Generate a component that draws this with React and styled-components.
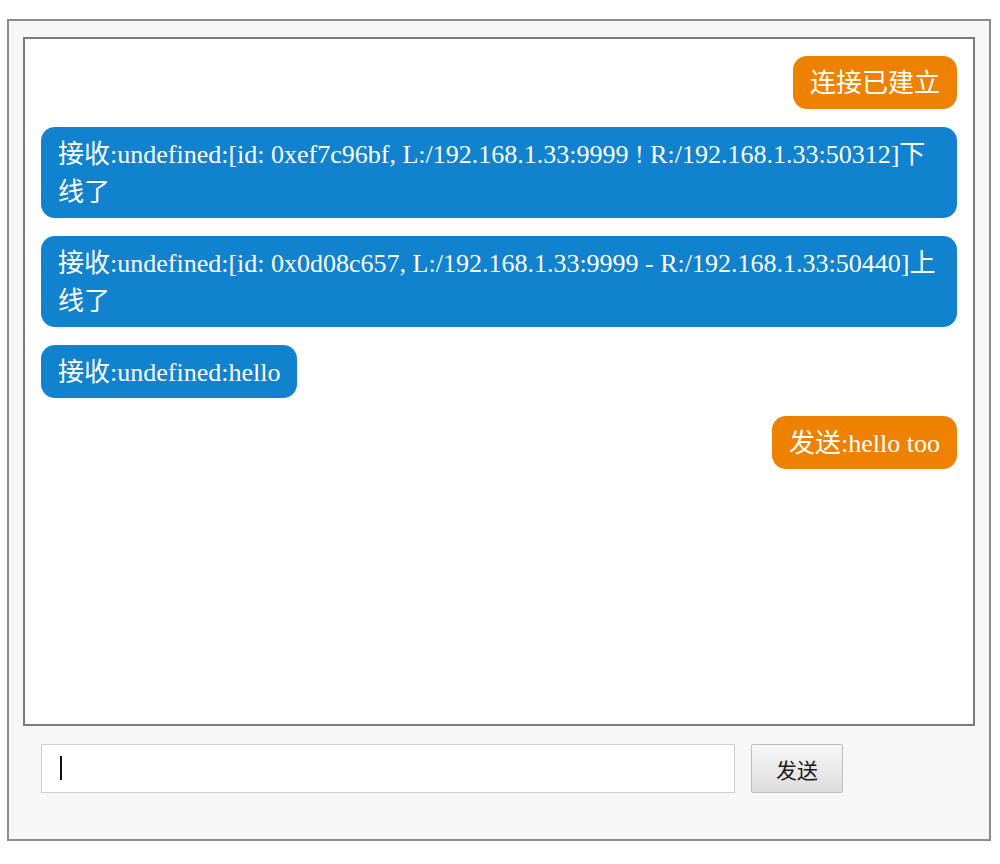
import React from "react";
import styled, { createGlobalStyle } from "styled-components";

const Global = createGlobalStyle`
  html, body { margin: 0; padding: 0; background: #ffffff; }
  body { font-family: "Liberation Serif", "Noto Sans CJK SC", serif; }
  * { box-sizing: border-box; }
`;

const Panel = styled.div`
  margin: 19px 0 0 7px;
  width: 984px;
  border: 2px solid #8c8c8c;
  background: #f7f7f7;
  padding: 16px 14px 46px 14px;
`;

const MessageBox = styled.div`
  height: 689px;
  border: 2px solid #7a7a7a;
  background: #ffffff;
  padding: 17px 16px;
  display: flex;
  flex-direction: column;
  gap: 18px;
  overflow: hidden;
`;

const Bubble = styled.div`
  align-self: ${(p) => (p.$sent ? "flex-end" : "flex-start")};
  max-width: 100%;
  background: ${(p) => (p.$sent ? "#ee8200" : "#1182cd")};
  color: #ffffff;
  font-family: "Liberation Serif", "Noto Sans CJK SC", serif;
  font-size: 26px;
  line-height: 38px;
  padding: 9px 17px 6px 17px;
  border-radius: 14px;
  word-break: break-all;
`;

const InputRow = styled.div`
  display: flex;
  align-items: center;
  gap: 16px;
  margin-top: 18px;
  padding-left: 18px;
`;

const InputWrap = styled.div`
  position: relative;
  width: 694px;
  height: 49px;
`;

const TextInput = styled.input`
  width: 100%;
  height: 100%;
  border: 1px solid #cfcfcf;
  background: #ffffff;
  padding: 0 19px;
  font-size: 22px;
  font-family: "Liberation Sans", "Noto Sans CJK SC", sans-serif;
  color: #111;
  outline: none;
`;

const Caret = styled.span`
  position: absolute;
  left: 19px;
  top: 12px;
  width: 2px;
  height: 24px;
  background: #111;
  pointer-events: none;
`;

const SendButton = styled.button`
  width: 92px;
  height: 49px;
  border: 1px solid #bdbdbd;
  border-radius: 2px;
  background: linear-gradient(#f7f7f7, #dcdcdc);
  font-family: "Noto Sans CJK SC", sans-serif;
  font-size: 21px;
  color: #1a1a1a;
  padding: 0;
`;

const messages = [
  { sent: true, text: "连接已建立" },
  { sent: false, text: "接收:undefined:[id: 0xef7c96bf, L:/192.168.1.33:9999 ! R:/192.168.1.33:50312]下线了" },
  { sent: false, text: "接收:undefined:[id: 0x0d08c657, L:/192.168.1.33:9999 - R:/192.168.1.33:50440]上线了" },
  { sent: false, text: "接收:undefined:hello" },
  { sent: true, text: "发送:hello too" },
];

export default function App() {
  return (
    <>
      <Global />
      <Panel>
        <MessageBox>
          {messages.map((m, i) => (
            <Bubble key={i} $sent={m.sent}>
              {m.text}
            </Bubble>
          ))}
        </MessageBox>
        <InputRow>
          <InputWrap>
            <TextInput />
            <Caret />
          </InputWrap>
          <SendButton>发送</SendButton>
        </InputRow>
      </Panel>
    </>
  );
}
